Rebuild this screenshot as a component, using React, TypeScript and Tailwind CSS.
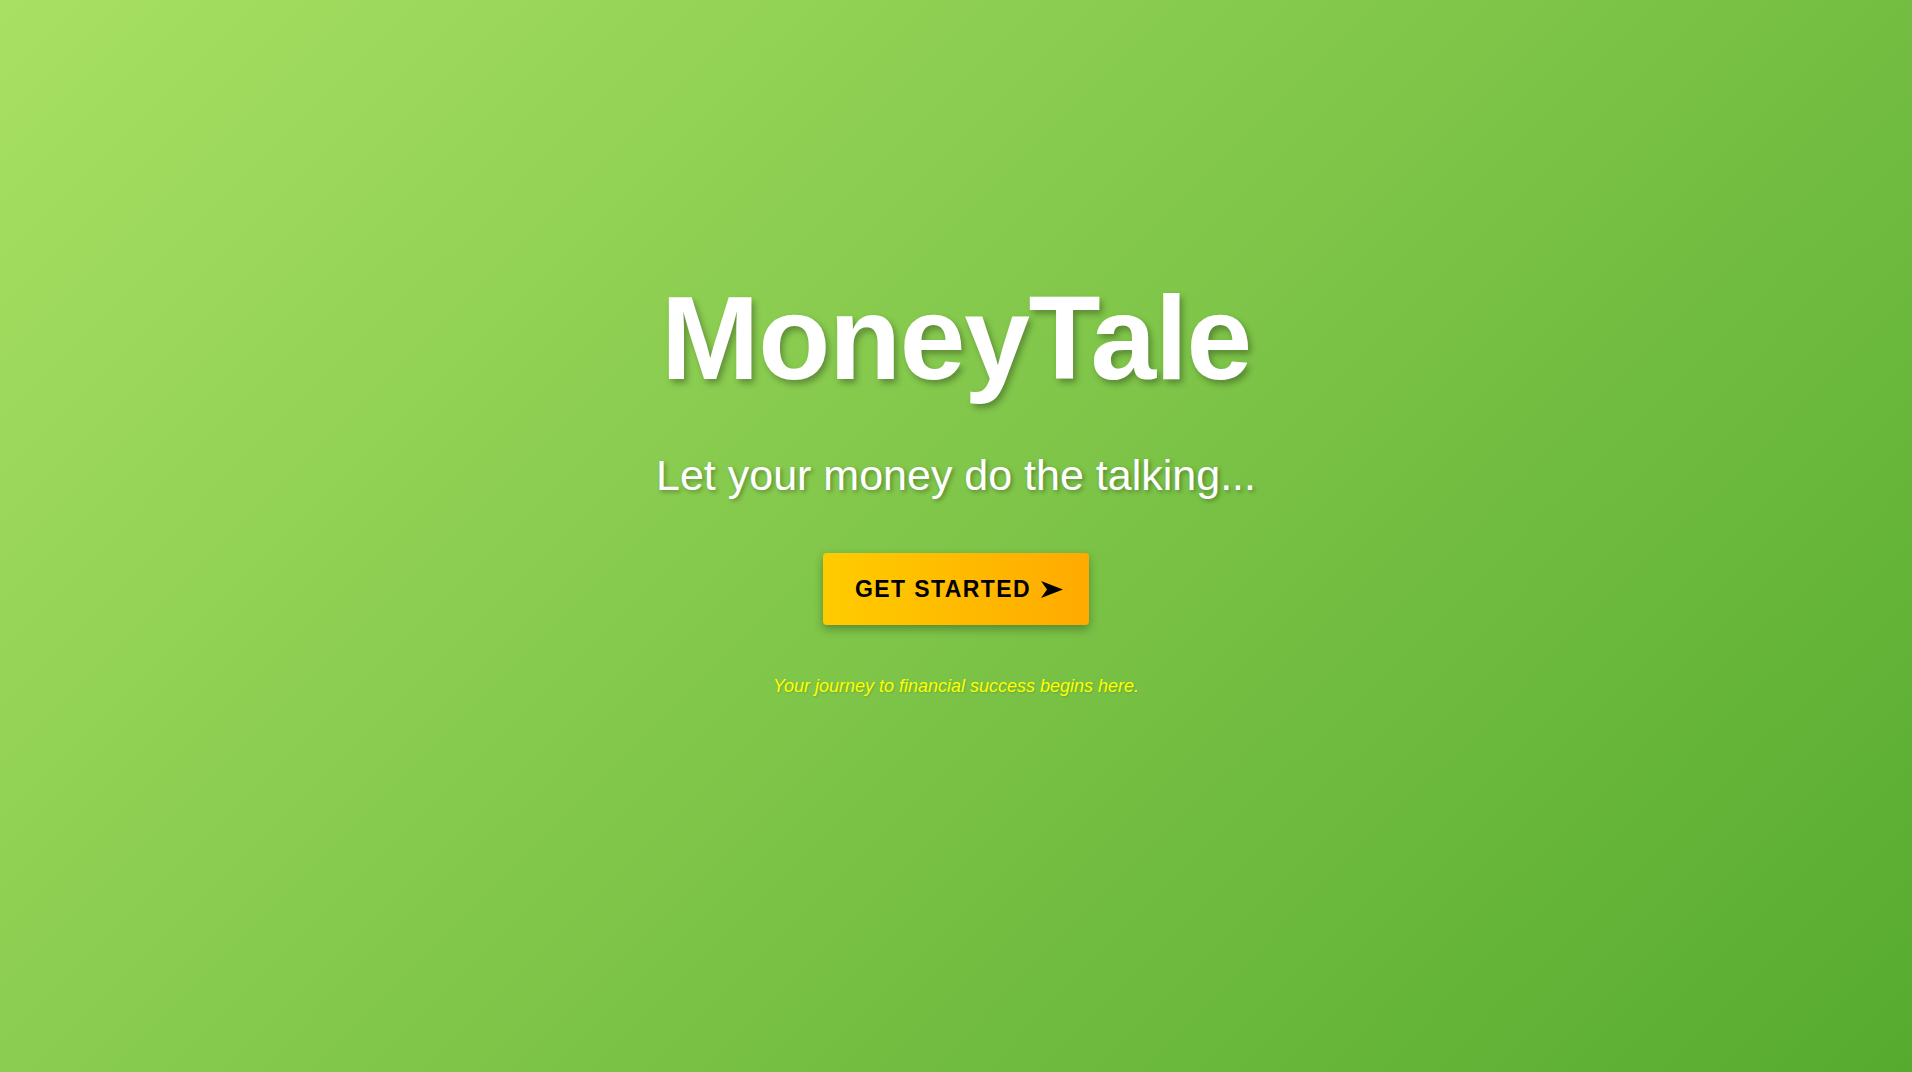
import React from "react";

const SendArrow = () => (
  <svg width="22" height="17" viewBox="0 0 22 17" className="shrink-0">
    <path d="M0 0 L22 8.5 L0 17 L6 8.5 Z" fill="#000" />
  </svg>
);

export default function App() {
  return (
    <div
      className="min-h-screen w-full bg-[linear-gradient(135deg,#a8e063_0%,#56ab2f_100%)] flex flex-col items-center pt-[279px] text-center"
      style={{ fontFamily: '"Liberation Sans", Arial, sans-serif' }}
    >
      {/* Title */}
      <h1 className="text-[118px] leading-none font-bold text-white tracking-[-1.25px] [text-shadow:3px_4px_6px_rgba(0,0,0,0.3)]">
        MoneyTale
      </h1>

      <p className="mt-[57px] text-[43px] leading-none text-white [text-shadow:2px_2px_4px_rgba(0,0,0,0.3)]">
        Let your money do the talking...
      </p>

      <button className="mt-[56px] h-[72px] pl-[32px] pr-[26px] flex items-center gap-[10px] rounded-[4px] bg-gradient-to-r from-[#ffcc00] to-[#ffaa00] shadow-[0_4px_10px_rgba(0,0,0,0.3)] text-black font-bold text-[23px] tracking-[1.4px] leading-none">
        GET STARTED
        <SendArrow />
      </button>

      <p className="mt-[52px] text-[18px] leading-none italic text-[#ffff00] [text-shadow:1px_1px_2px_rgba(0,0,0,0.15)]">
        Your journey to financial success begins here.
      </p>
    </div>
  );
}
